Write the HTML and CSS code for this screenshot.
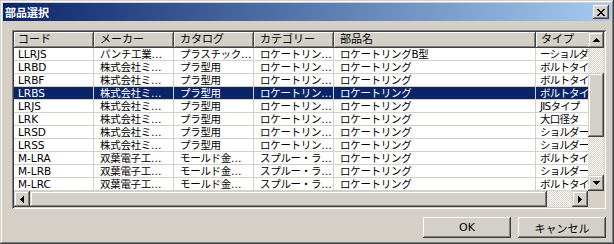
FILE: index.html
```html
<!DOCTYPE html>
<html lang="ja">

<head>
    <meta charset="UTF-8">
    <meta name="viewport" content="width=device-width, initial-scale=1.0">
    <title>部品選択</title>
    <link rel="stylesheet" href="styles.css">
</head>

<body>

    <div class="window">
        <div class="titlebar">
            <span class="title">部品選択</span>
            <button class="close">
                <svg width="8" height="7" viewBox="0 0 8 7" shape-rendering="crispEdges">
                    <path d="M0 0h2v1H0z M6 0h2v1H6z M1 1h2v1H1z M5 1h2v1H5z M2 2h4v1H2z M3 3h2v1H3z M2 4h4v1H2z M1 5h2v1H1z M5 5h2v1H5z M0 6h2v1H0z M6 6h2v1H6z" />
                </svg>
            </button>
        </div>

        <div class="body">
            <div class="listview">
                <div class="list-main">
                    <div class="header">
                        <div class="hcell c1">コード</div>
                        <div class="hcell c2">メーカー</div>
                        <div class="hcell c3">カタログ</div>
                        <div class="hcell c4">カテゴリー</div>
                        <div class="hcell c5">部品名</div>
                        <div class="hcell c6">タイプ</div>
                    </div>

                    <div class="row">
                        <div class="cell c1">LLRJS</div>
                        <div class="cell c2">パンチ工業…</div>
                        <div class="cell c3">プラスチック…</div>
                        <div class="cell c4">ロケートリン…</div>
                        <div class="cell c5">ロケートリングB型</div>
                        <div class="cell c6">ーショルダ</div>
                    </div>
                    <div class="row">
                        <div class="cell c1">LRBD</div>
                        <div class="cell c2">株式会社ミ…</div>
                        <div class="cell c3">プラ型用</div>
                        <div class="cell c4">ロケートリン…</div>
                        <div class="cell c5">ロケートリング</div>
                        <div class="cell c6">ボルトタイ</div>
                    </div>
                    <div class="row">
                        <div class="cell c1">LRBF</div>
                        <div class="cell c2">株式会社ミ…</div>
                        <div class="cell c3">プラ型用</div>
                        <div class="cell c4">ロケートリン…</div>
                        <div class="cell c5">ロケートリング</div>
                        <div class="cell c6">ボルトタイ</div>
                    </div>
                    <div class="row sel">
                        <div class="cell c1">LRBS</div>
                        <div class="cell c2">株式会社ミ…</div>
                        <div class="cell c3">プラ型用</div>
                        <div class="cell c4">ロケートリン…</div>
                        <div class="cell c5">ロケートリング</div>
                        <div class="cell c6">ボルトタイ</div>
                    </div>
                    <div class="row">
                        <div class="cell c1">LRJS</div>
                        <div class="cell c2">株式会社ミ…</div>
                        <div class="cell c3">プラ型用</div>
                        <div class="cell c4">ロケートリン…</div>
                        <div class="cell c5">ロケートリング</div>
                        <div class="cell c6">JISタイプ</div>
                    </div>
                    <div class="row">
                        <div class="cell c1">LRK</div>
                        <div class="cell c2">株式会社ミ…</div>
                        <div class="cell c3">プラ型用</div>
                        <div class="cell c4">ロケートリン…</div>
                        <div class="cell c5">ロケートリング</div>
                        <div class="cell c6">大口径タ</div>
                    </div>
                    <div class="row">
                        <div class="cell c1">LRSD</div>
                        <div class="cell c2">株式会社ミ…</div>
                        <div class="cell c3">プラ型用</div>
                        <div class="cell c4">ロケートリン…</div>
                        <div class="cell c5">ロケートリング</div>
                        <div class="cell c6">ショルダー</div>
                    </div>
                    <div class="row">
                        <div class="cell c1">LRSS</div>
                        <div class="cell c2">株式会社ミ…</div>
                        <div class="cell c3">プラ型用</div>
                        <div class="cell c4">ロケートリン…</div>
                        <div class="cell c5">ロケートリング</div>
                        <div class="cell c6">ショルダー</div>
                    </div>
                    <div class="row">
                        <div class="cell c1">M-LRA</div>
                        <div class="cell c2">双葉電子工…</div>
                        <div class="cell c3">モールド金…</div>
                        <div class="cell c4">スプルー・ラ…</div>
                        <div class="cell c5">ロケートリング</div>
                        <div class="cell c6">ボルトタイ</div>
                    </div>
                    <div class="row">
                        <div class="cell c1">M-LRB</div>
                        <div class="cell c2">双葉電子工…</div>
                        <div class="cell c3">モールド金…</div>
                        <div class="cell c4">スプルー・ラ…</div>
                        <div class="cell c5">ロケートリング</div>
                        <div class="cell c6">ショルダー</div>
                    </div>
                    <div class="row">
                        <div class="cell c1">M-LRC</div>
                        <div class="cell c2">双葉電子工…</div>
                        <div class="cell c3">モールド金…</div>
                        <div class="cell c4">スプルー・ラ…</div>
                        <div class="cell c5">ロケートリング</div>
                        <div class="cell c6">ボルトタイ</div>
                    </div>
                </div>

                <div class="vscroll">
                    <div class="arrow">
                        <svg width="7" height="4" viewBox="0 0 7 4" shape-rendering="crispEdges"><path d="M3 0h1v1h1v1h1v1h1v1H0V3h1V2h1V1h1z" /></svg>
                    </div>
                    <div class="vtrack">
                        <div class="vthumb"></div>
                    </div>
                    <div class="arrow">
                        <svg width="7" height="4" viewBox="0 0 7 4" shape-rendering="crispEdges"><path d="M0 0h7v1h-1v1h-1v1h-1v1h-1V3h-1V2h-1V1H0z" /></svg>
                    </div>
                </div>

                <div class="hscroll">
                    <div class="arrow">
                        <svg width="4" height="7" viewBox="0 0 4 7" shape-rendering="crispEdges"><path d="M3 0h1v7h-1v-1h-1v-1h-1v-1H0V3h1V2h1V1h1z" /></svg>
                    </div>
                    <div class="htrack">
                        <div class="hthumb"></div>
                    </div>
                    <div class="arrow">
                        <svg width="4" height="7" viewBox="0 0 4 7" shape-rendering="crispEdges"><path d="M0 0h1v1h1v1h1v1h1v1h-1v1h-1v1h-1v1H0z" /></svg>
                    </div>
                </div>

                <div class="corner"></div>
            </div>

            <div class="buttons">
                <button class="btn">OK</button>
                <button class="btn">キャンセル</button>
            </div>
        </div>
    </div>

</body>

</html>
```

FILE: styles.css
```css
* {
    box-sizing: border-box;
}

body {
    margin: 0;
    background-color: #d4d0c8;
    font-family: "DejaVu Sans", "Noto Sans CJK JP", sans-serif;
    font-size: 11px;
    color: black;
}

.window {
    width: 614px;
    height: 244px;
    padding: 3px;
    box-shadow: inset -1px -1px #404040, inset 1px 1px #d4d0c8,
        inset -2px -2px #808080, inset 2px 2px #fff;
}

.titlebar {
    height: 18px;
    display: flex;
    align-items: center;
    justify-content: space-between;
    padding: 0 2px 0 2px;
    background: linear-gradient(to right, #0a246a, #a6caf0);
}

.title {
    color: white;
    font-weight: bold;
    font-family: "Noto Sans CJK JP", sans-serif;
    font-size: 11px;
}

.close {
    width: 16px;
    height: 14px;
    border: none;
    padding: 0;
    padding-top: 1px;
    display: flex;
    align-items: center;
    justify-content: center;
    background-color: #d4d0c8;
    box-shadow: inset -1px -1px #404040, inset 1px 1px #fff,
        inset -2px -2px #808080, inset 2px 2px #d4d0c8;
}

.body {
    padding: 9px 5px 0 9px;
}

.listview {
    height: 179px;
    padding: 2px;
    background-color: white;
    display: grid;
    grid-template-columns: 1fr 16px;
    grid-template-rows: 1fr 16px;
    box-shadow: inset 1px 1px #808080, inset -1px -1px #fff,
        inset 2px 2px #404040, inset -2px -2px #d4d0c8;
}

.list-main {
    overflow: hidden;
    background-color: white;
}

.header,
.row {
    display: flex;
}

.hcell {
    flex: none;
    height: 16px;
    line-height: 16px;
    padding-left: 6px;
    white-space: nowrap;
    overflow: hidden;
    background-color: #d4d0c8;
    box-shadow: inset -1px -1px #404040, inset 1px 1px #fff,
        inset -2px -2px #808080;
}

.cell {
    flex: none;
    height: 13px;
    line-height: 13px;
    padding-left: 6px;
    font-size: 10.5px;
    letter-spacing: -0.3px;
    white-space: nowrap;
    overflow: hidden;
    border-right: 1px solid #d4d0c8;
    border-bottom: 1px solid #d4d0c8;
}

.c1 {
    width: 80px;
    padding-left: 4px;
    letter-spacing: 0;
}

.c2,
.c3,
.c4 {
    width: 80px;
}

.c5 {
    width: 202px;
}

.c6 {
    width: 54px;
    padding-left: 5px;
    border-right: none;
}

.cell.c6 {
    padding-left: 4px;
    letter-spacing: -0.8px;
}

.row.sel {
    position: relative;
}

.row.sel .cell {
    background-color: #0a246a;
    color: white;
}

.row.sel::before {
    content: "";
    position: absolute;
    left: 0;
    right: 0;
    top: -1px;
    border-top: 1px dotted #e8cf7a;
}

.vscroll {
    display: flex;
    flex-direction: column;
    background-color: #d4d0c8;
}

.hscroll {
    display: flex;
    background-color: #d4d0c8;
}

.arrow {
    flex: none;
    width: 16px;
    height: 16px;
    display: flex;
    align-items: center;
    justify-content: center;
    background-color: #d4d0c8;
    box-shadow: inset -1px -1px #404040, inset 1px 1px #d4d0c8,
        inset -2px -2px #808080, inset 2px 2px #fff;
}

.vtrack,
.htrack {
    flex: 1;
    background: repeating-conic-gradient(#d4d0c8 0% 25%, #fff 0% 50%) 0 0 / 2px 2px;
}

.vthumb,
.hthumb {
    background-color: #d4d0c8;
    box-shadow: inset -1px -1px #404040, inset 1px 1px #d4d0c8,
        inset -2px -2px #808080, inset 2px 2px #fff;
}

.vthumb {
    margin-top: 25px;
    height: 64px;
}

.hthumb {
    width: 517px;
    height: 16px;
}

.corner {
    background-color: #d4d0c8;
}

.buttons {
    display: flex;
    justify-content: flex-end;
    gap: 7px;
    margin-top: 8px;
}

.btn {
    width: 88px;
    height: 21px;
    border: none;
    padding: 0;
    font-family: inherit;
    font-size: 11px;
    color: black;
    background-color: #d4d0c8;
    box-shadow: inset -1px -1px #404040, inset 1px 1px #fff,
        inset -2px -2px #808080, inset 2px 2px #d4d0c8;
}
```
